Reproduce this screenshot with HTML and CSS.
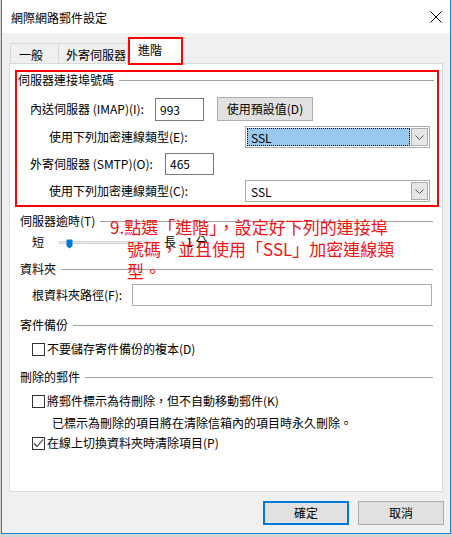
FILE: index.html
```html
<!DOCTYPE html>
<html lang="zh-Hant">
<head>
<meta charset="utf-8">
<title>網際網路郵件設定</title>
<link rel="stylesheet" href="styles.css">
</head>
<body>
<div class="window">
  <div class="titlebar">
    <span class="title">網際網路郵件設定</span>
    <svg class="close" width="12" height="12" viewBox="0 0 12 12"><path d="M0.5 0.5 L11.5 11.5 M11.5 0.5 L0.5 11.5" stroke="#000" stroke-width="1" fill="none"/></svg>
  </div>
  <div class="body">
    <div class="tabs">
      <div class="tab tab-general">一般</div>
      <div class="tab tab-out">外寄伺服器</div>
      <div class="tab tab-active">進階</div>
    </div>
    <div class="panel">
      <div class="group group-ports">
        <div class="gtitle"><span>伺服器連接埠號碼</span><i class="gline"></i></div>
        <div class="row row-imap">
          <span class="lbl lbl-imap">內送伺服器 (IMAP)(I):</span>
          <div class="num">993</div>
          <div class="btn btn-default">使用預設值(D)</div>
        </div>
        <div class="row row-enc row-enc1">
          <span class="lbl lbl-enc">使用下列加密連線類型(E):</span>
          <div class="combo">
            <div class="combo-val focused">SSL</div>
            <div class="combo-btn"><svg width="9" height="5" viewBox="0 0 9 5"><path d="M0.5 0.5 L4.5 4.5 L8.5 0.5" stroke="#555" fill="none"/></svg></div>
          </div>
        </div>
        <div class="row row-smtp">
          <span class="lbl lbl-smtp">外寄伺服器 (SMTP)(O):</span>
          <div class="num">465</div>
        </div>
        <div class="row row-enc row-enc2">
          <span class="lbl lbl-enc">使用下列加密連線類型(C):</span>
          <div class="combo">
            <div class="combo-val">SSL</div>
            <div class="combo-btn"><svg width="9" height="5" viewBox="0 0 9 5"><path d="M0.5 0.5 L4.5 4.5 L8.5 0.5" stroke="#555" fill="none"/></svg></div>
          </div>
        </div>
      </div>

      <div class="group group-timeout">
        <div class="gtitle"><span>伺服器逾時(T)</span><i class="gline"></i></div>
        <div class="row row-slider">
          <span>短</span>
          <div class="track"><svg class="thumb" width="7" height="10" viewBox="0 0 7 10"><path d="M0.5 1.5 Q0.5 0.5 1.5 0.5 L5.5 0.5 Q6.5 0.5 6.5 1.5 L6.5 7 L3.5 9.5 L0.5 7 Z" fill="#0078d7"/></svg></div>
          <span class="long">長</span>
          <span class="minutes">1 分</span>
        </div>
      </div>

      <div class="group group-folder">
        <div class="gtitle"><span>資料夾</span><i class="gline"></i></div>
        <div class="row row-root">
          <span class="lbl lbl-root">根資料夾路徑(F):</span>
          <div class="path"></div>
        </div>
      </div>

      <div class="group group-sent">
        <div class="gtitle"><span>寄件備份</span><i class="gline"></i></div>
        <div class="row row-check row-check1">
          <span class="cb"></span><span>不要儲存寄件備份的複本(D)</span>
        </div>
      </div>

      <div class="group group-deleted">
        <div class="gtitle"><span>刪除的郵件</span><i class="gline"></i></div>
        <div class="row row-check row-check2">
          <span class="cb"></span><span>將郵件標示為待刪除，但不自動移動郵件(K)</span>
        </div>
        <div class="row row-note">已標示為刪除的項目將在清除信箱內的項目時永久刪除。</div>
        <div class="row row-check row-check3">
          <span class="cb checked"><svg width="11" height="11" viewBox="0 0 11 11"><path d="M1 5.5 L4 8.5 L10 1.5" stroke="#333" stroke-width="1.1" fill="none"/></svg></span><span>在線上切換資料夾時清除項目(P)</span>
        </div>
      </div>
    </div>
    <div class="footer">
      <div class="dbtn dbtn-ok">確定</div>
      <div class="dbtn">取消</div>
    </div>
  </div>
  <div class="note">9.點選「進階」，設定好下列的連接埠<br>號碼，並且使用「SSL」加密連線類<br>型。</div>
</div>
</body>
</html>
```

FILE: styles.css
```css
html, body {
  margin: 0;
  padding: 0;
}
body {
  background: #d4d4d4;
  font-family: "Noto Sans CJK TC", "Noto Sans", sans-serif;
  font-size: 12px;
  line-height: 16px;
  color: #000;
  width: 452px;
  height: 537px;
  overflow: hidden;
}
.window {
  position: relative;
  margin-left: 1px;
  width: 448px;
  height: 533px;
  border: 1px solid #1883d7;
  border-top: none;
  background: #f0f0f0;
}
.titlebar {
  height: 33px;
  background: #fff;
  display: flex;
  align-items: center;
  justify-content: space-between;
  padding: 2px 8px 0 9px;
  box-sizing: border-box;
}
.close {
  margin-top: -2px;
}
.body {
  padding: 4px 7px 0 7px;
}
.tabs {
  display: flex;
  align-items: flex-end;
  height: 26px;
  padding-left: 1px;
}
.tab {
  height: 20px;
  box-sizing: border-box;
  border: 1px solid #d9d9d9;
  border-bottom: none;
  background: #f0f0f0;
  line-height: 19px;
  padding-top: 1px;
}
.tab-general {
  width: 49px;
  padding-left: 8px;
}
.tab-out {
  width: 69px;
  border-left: none;
  padding-left: 7px;
}
.tab-active {
  position: relative;
  z-index: 2;
  width: 55px;
  height: 28px;
  margin-bottom: -2px;
  border: 2px solid #ff0000;
  background: #fff;
  padding-left: 8px;
  line-height: 22px;
  padding-top: 0;
}
.panel {
  height: 427px;
  border: 1px solid #d9d9d9;
  background: #fff;
}
.group {
  padding: 0 9px 0 10px;
}
.gtitle {
  display: flex;
  align-items: center;
  height: 16px;
}
.gline {
  flex: 1;
  height: 1px;
  background: #a0a0a0;
  margin-left: 5px;
}
.row {
  display: flex;
  align-items: center;
  padding-left: 12px;
  white-space: nowrap;
}
.group-ports {
  margin: 6px 3px 0 5px;
  border: 2px solid #ff0000;
  padding: 0 3px 3px 1px;
}
.row-imap {
  margin-top: 9px;
  height: 24px;
}
.lbl-imap {
  width: 125px;
}
.num {
  width: 49px;
  height: 23px;
  box-sizing: border-box;
  border: 1px solid #7a7a7a;
  padding-left: 4px;
  line-height: 21px;
}
.btn-default {
  margin-left: 13px;
  width: 96px;
  height: 24px;
  box-sizing: border-box;
  border: 1px solid #adadad;
  background: #e1e1e1;
  text-align: center;
  line-height: 22px;
}
.row-enc {
  height: 22px;
  padding-left: 31px;
}
.row-enc1 {
  margin-top: 5px;
}
.row-enc2 {
  margin-top: 5px;
}
.lbl-enc {
  width: 196px;
}
.combo {
  width: 185px;
  height: 22px;
  box-sizing: border-box;
  border: 1px solid #acacac;
  display: flex;
  padding: 1px;
  background: #fff;
}
.combo-val {
  flex: 1;
  padding-left: 3px;
  line-height: 18px;
  box-sizing: border-box;
  border: 1px dotted transparent;
}
.combo-val.focused {
  background: #99c9ef;
  border-color: #000;
}
.combo-btn {
  width: 17px;
  box-sizing: border-box;
  border: 1px solid #acacac;
  background: #e6e6e6;
  display: flex;
  align-items: center;
  justify-content: center;
  margin-left: 1px;
}
.row-smtp {
  margin-top: 5px;
  height: 22px;
}
.lbl-smtp {
  width: 135px;
}
.row-smtp .num {
  height: 22px;
  line-height: 20px;
}
.group-timeout {
  margin-top: 6px;
}
.row-slider {
  margin-top: 5px;
  height: 16px;
}
.track {
  position: relative;
  width: 89px;
  height: 3px;
  margin-left: 15px;
  background: #e7eaea;
  border: 1px solid #d6d6d6;
  box-sizing: border-box;
  margin-top: 1px;
}
.thumb {
  position: absolute;
  left: 6px;
  top: -3px;
}
.long {
  margin-left: 16px;
}
.minutes {
  margin-left: 10px;
}
.group-folder {
  margin-top: 11px;
}
.row-root {
  margin-top: 7px;
  height: 22px;
}
.lbl-root {
  width: 100px;
}
.path {
  width: 300px;
  height: 22px;
  box-sizing: border-box;
  border: 1px solid #adadad;
}
.group-sent {
  margin-top: 11px;
}
.row-check {
  height: 16px;
}
.row-check1 {
  margin-top: 8px;
}
.group-deleted {
  margin-top: 12px;
}
.row-check2 {
  margin-top: 8px;
}
.row-note {
  margin-top: 6px;
  height: 16px;
  padding-left: 32px;
}
.row-check3 {
  margin-top: 4px;
}
.cb {
  width: 13px;
  height: 13px;
  box-sizing: border-box;
  border: 1px solid #333;
  background: #fff;
  margin-right: 2px;
  display: flex;
  align-items: center;
  justify-content: center;
}
.footer {
  display: flex;
  justify-content: flex-end;
  gap: 9px;
  margin-top: 9px;
  margin-right: -1px;
}
.dbtn {
  width: 86px;
  height: 24px;
  box-sizing: border-box;
  border: 1px solid #adadad;
  background: #e1e1e1;
  text-align: center;
  line-height: 22px;
}
.dbtn-ok {
  border: 2px solid #0078d7;
  line-height: 20px;
}
.note {
  position: absolute;
  left: 108px;
  top: 216px;
  font-size: 17px;
  line-height: 22px;
  color: #f01414;
  padding-left: 17px;
  text-indent: -17px;
  white-space: nowrap;
}
```
